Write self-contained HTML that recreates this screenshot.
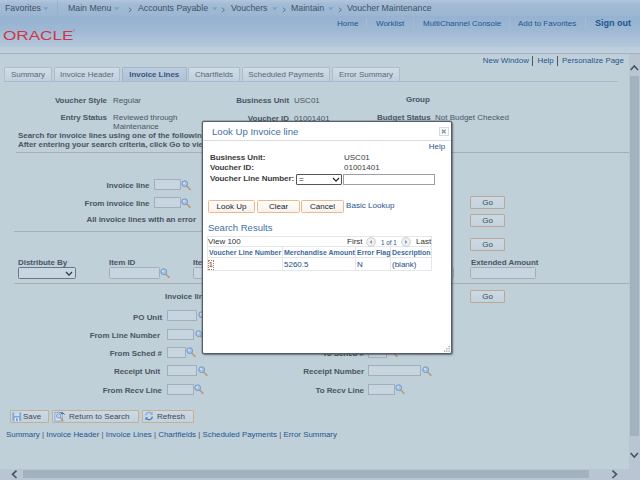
<!DOCTYPE html>
<html><head><meta charset="utf-8"><title>Voucher Maintenance</title>
<style>
*{box-sizing:border-box;margin:0;padding:0}
html,body{width:640px;height:480px;overflow:hidden}
body{position:relative;background:#bfd0d9;font-family:"Liberation Sans",Arial,sans-serif;font-size:8px;color:#4b5563;line-height:10px}
.a{position:absolute;white-space:nowrap}
.b{font-weight:bold;letter-spacing:-.05px}
.r{text-align:right}
.lk{color:#1f5590}
#nav{left:0;top:0;width:640px;height:16px;background:linear-gradient(#b2c6db,#a3bcd5 25%,#9cb6d1)}
#nav .a{top:2px;font-size:8.75px;line-height:12px;color:#3f5068}
#nav .ch{top:3px;font-size:8px;color:#5d7590}
#nav .dd{top:8px;width:0;height:0;border:2.5px solid transparent;border-top:3px solid #7d9fcb;border-bottom:none}
#hdr{left:0;top:16px;width:640px;height:31px;background:linear-gradient(#95b2d0,#9cb7d3 40%,#b5c8db)}
#hdr2{left:0;top:47px;width:640px;height:6px;background:linear-gradient(#bbccdc,#c0d0de)}
#hdrline{left:0;top:53px;width:640px;height:1px;background:#a7b1c3}
.hl{top:18px;font-size:8px;line-height:11px;color:#1f5590}
.hs{top:18px;width:1px;height:11px;background:#a9bccf}
.tab{top:67px;height:14px;border:1px solid #adbccb;border-bottom:none;background:linear-gradient(#d0dde7,#c0d0dc);font-size:8px;line-height:13px;text-align:center;color:#5a6878;border-radius:2px 2px 0 0}
.inp{border:1px solid #a4aeb9;background:#c6d5df;height:11px}
.btn{border:1px solid #c4b194;background:linear-gradient(#cbd9e3,#c3d3de);border-radius:1px;height:13px;font-size:8px;line-height:11px;text-align:center;color:#3f4852}
.go{border-color:#bda79a}
.hr{height:1px;background:#aaacb2}
i{font-style:normal;color:#5a5068}
.mbtn{height:13px;border:1px solid #ecb88c;border-radius:1.5px;background:linear-gradient(#fff,#f6f1ec);font-size:8px;line-height:11px;text-align:center;color:#222}
#grid{left:207px;top:236px;width:225px;height:35px;border:1px solid #e4e6e9;background:#fff}
.gh{top:248px;font-size:7px;line-height:10px;font-weight:bold;color:#3d6a9c}
.gd{top:260px;font-size:8px;line-height:10px;color:#1c4a88}
.vl{top:247px;width:1px;height:24px;background:#e4e6e9}
</style></head><body>
<div class="a" id="nav">
 <div class="a" style="left:5px">Favorites</div><svg class="a" style="left:42.5px;top:7px" width="6" height="4" viewBox="0 0 6 4"><path d="M.3 .3 L5.3 .3 L2.8 3.3z" fill="#7b9fcf"/></svg>
 <div class="a" style="left:57px;top:1px;width:1px;height:14px;background:#98b0cb"></div>
 <div class="a" style="left:68px">Main Menu</div><svg class="a" style="left:113.5px;top:7px" width="6" height="4" viewBox="0 0 6 4"><path d="M.3 .3 L5.3 .3 L2.8 3.3z" fill="#7b9fcf"/></svg>
 <svg class="a" style="left:128px;top:6.5px" width="5" height="6" viewBox="0 0 5 6"><path d="M.8 .6 L3.4 2.9 L.8 5.2" fill="none" stroke="#566a88" stroke-width=".9"/></svg>
 <div class="a" style="left:138px">Accounts Payable</div><svg class="a" style="left:211.5px;top:7px" width="6" height="4" viewBox="0 0 6 4"><path d="M.3 .3 L5.3 .3 L2.8 3.3z" fill="#7b9fcf"/></svg>
 <svg class="a" style="left:221px;top:6.5px" width="5" height="6" viewBox="0 0 5 6"><path d="M.8 .6 L3.4 2.9 L.8 5.2" fill="none" stroke="#566a88" stroke-width=".9"/></svg>
 <div class="a" style="left:231px">Vouchers</div><svg class="a" style="left:271.5px;top:7px" width="6" height="4" viewBox="0 0 6 4"><path d="M.3 .3 L5.3 .3 L2.8 3.3z" fill="#7b9fcf"/></svg>
 <svg class="a" style="left:282px;top:6.5px" width="5" height="6" viewBox="0 0 5 6"><path d="M.8 .6 L3.4 2.9 L.8 5.2" fill="none" stroke="#566a88" stroke-width=".9"/></svg>
 <div class="a" style="left:291px">Maintain</div><svg class="a" style="left:327.5px;top:7px" width="6" height="4" viewBox="0 0 6 4"><path d="M.3 .3 L5.3 .3 L2.8 3.3z" fill="#7b9fcf"/></svg>
 <svg class="a" style="left:338px;top:6.5px" width="5" height="6" viewBox="0 0 5 6"><path d="M.8 .6 L3.4 2.9 L.8 5.2" fill="none" stroke="#566a88" stroke-width=".9"/></svg>
 <div class="a" style="left:347px">Voucher Maintenance</div>
</div>
<div class="a" id="hdr"></div><div class="a" id="hdr2"></div>
<div class="a" id="hdrline"></div>
<div class="a hl" style="left:337px">Home</div><div class="a hs" style="left:366px"></div>
<div class="a hl" style="left:376px">Worklist</div><div class="a hs" style="left:413px"></div>
<div class="a hl" style="left:423px">MultiChannel Console</div><div class="a hs" style="left:509px"></div>
<div class="a hl" style="left:518px">Add to Favorites</div><div class="a hs" style="left:585px"></div>
<div class="a hl b" style="left:595px;font-size:9.1px">Sign out</div>
<div class="a" style="left:2.6px;top:28.6px;font-size:12.5px;line-height:14px;color:#cf3548;transform-origin:0 0;transform:scaleX(1.37)">ORACLE</div>
<div class="a" style="left:73px;top:29px;font-size:3px;line-height:4px;color:#cf3548">®</div>
<div class="a lk" style="left:482.8px;top:56px;font-size:7.9px">New Window</div><div class="a lk" style="left:537.5px;top:56px;font-size:7.9px">Help</div><div class="a lk" style="left:562px;top:56px;font-size:7.9px">Personalize Page</div><div class="a" style="left:532px;top:56px;width:1px;height:10px;background:#4e5866"></div><div class="a" style="left:557px;top:56px;width:1px;height:10px;background:#4e5866"></div>

<div class="a tab" style="left:4px;width:48px">Summary</div>
<div class="a tab" style="left:54px;width:66px">Invoice Header</div>
<div class="a tab b" style="left:122px;width:64.5px;background:linear-gradient(#bccde0,#adc1d7);border-color:#a0b3c9;color:#3e5579">Invoice Lines</div>
<div class="a tab" style="left:188px;width:52px">Chartfields</div>
<div class="a tab" style="left:242px;width:88px">Scheduled Payments</div>
<div class="a tab" style="left:332px;width:68px">Error Summary</div>
<div class="a hr" style="left:4px;top:81px;width:614px;background:#a9bad0"></div>

<div class="a b r" style="left:0;width:107px;top:96px">Voucher Style</div>
<div class="a" style="left:113px;top:96px">Regular</div>
<div class="a b r" style="left:0;width:107px;top:113px">Entry Status</div>
<div class="a" style="left:113px;top:113px">Reviewed through</div>
<div class="a" style="left:113px;top:122px">Maintenance</div>
<div class="a b r" style="left:190px;width:99px;top:96px">Business Unit</div>
<div class="a" style="left:294px;top:96px">USC01</div>
<div class="a b r" style="left:190px;width:99px;top:114px">Voucher ID</div>
<div class="a" style="left:294px;top:114px">01001401</div>
<div class="a b" style="left:406px;top:95px">Group</div>
<div class="a b" style="left:377px;top:113px">Budget Status</div>
<div class="a" style="left:435px;top:113px">Not Budget Checked</div>
<div class="a b" style="left:18px;top:131px">Search for invoice lines using one of the following</div>
<div class="a b" style="left:18px;top:140px">After entering your search criteria, click Go to view</div>
<div class="a hr" style="left:16px;top:152px;width:613px"></div>

<div class="a b r" style="left:50px;width:99.5px;top:181px">Invoice line</div>
<div class="a inp" style="left:154px;top:179px;width:27px"></div>
<div class="a b r" style="left:50px;width:99.5px;top:199px">From invoice line</div>
<div class="a inp" style="left:154px;top:197px;width:27px"></div>
<div class="a b r" style="left:50px;width:146px;top:215px">All invoice lines with an error</div>
<div class="a btn go" style="left:470px;top:196px;width:35px">Go</div>
<div class="a btn go" style="left:470px;top:214px;width:35px">Go</div>
<div class="a btn go" style="left:470px;top:238px;width:35px">Go</div>
<div class="a btn go" style="left:470px;top:290px;width:35px">Go</div>
<div class="a hr" style="left:13.5px;top:231px;width:420px"></div>
<div class="a b" style="left:18px;top:258px">Distribute By</div>
<div class="a inp" style="left:18px;top:267px;width:58px;height:12px;background:#c7d6e0;border-color:#6b768a;border-radius:1.5px"></div>
<svg class="a" style="left:65px;top:271px" width="8" height="6" viewBox="0 0 8 6"><path d="M1 1 L4 4.2 L7 1" stroke="#2c3442" stroke-width="1.2" fill="none"/></svg>
<div class="a b" style="left:109px;top:258px">Item ID</div>
<div class="a inp" style="left:109px;top:267px;width:50.5px;height:12px;border-radius:1.5px"></div>
<div class="a b" style="left:193px;top:258px">Item</div>
<div class="a inp" style="left:192.5px;top:267px;width:60px;height:12px;border-radius:1.5px"></div>
<div class="a b" style="left:471px;top:258px">Extended Amount</div>
<div class="a inp" style="left:470px;top:267px;width:66px;height:12px;border-radius:1.5px"></div>
<div class="a inp" style="left:400px;top:267px;width:54px;height:12px;border-radius:1.5px"></div>
<div class="a hr" style="left:13.5px;top:283px;width:615.5px"></div>
<div class="a b" style="left:165px;top:292px">Invoice line</div>
<div class="a b r" style="left:50px;width:112px;top:313px">PO Unit</div>
<div class="a inp" style="left:167px;top:310px;width:30px"></div>
<div class="a b r" style="left:50px;width:110px;top:331px">From Line Number</div>
<div class="a inp" style="left:167px;top:329px;width:27px"></div>
<div class="a b r" style="left:50px;width:112px;top:349px">From Sched #</div>
<div class="a inp" style="left:167px;top:347px;width:19px"></div>
<div class="a b r" style="left:50px;width:110px;top:367px">Receipt Unit</div>
<div class="a inp" style="left:167px;top:365px;width:30px"></div>
<div class="a b r" style="left:50px;width:112px;top:386px">From Recv Line</div>
<div class="a inp" style="left:167px;top:384px;width:27px"></div>
<div class="a b r" style="left:250px;width:114px;top:367px">Receipt Number</div>
<div class="a b r" style="left:250px;width:114px;top:349px">To Sched #</div>
<div class="a inp" style="left:368px;top:347px;width:19px"></div>
<div class="a inp" style="left:368px;top:365px;width:53px"></div>
<div class="a b r" style="left:250px;width:114px;top:386px">To Recv Line</div>
<div class="a inp" style="left:368px;top:384px;width:27px"></div>

<div class="a btn" style="left:10px;top:410px;width:39px;text-align:left;padding-left:12px">Save</div>
<div class="a btn" style="left:52px;top:410px;width:87px;text-align:left;padding-left:16px">Return to Search</div>
<div class="a btn" style="left:142px;top:410px;width:52px;text-align:left;padding-left:14px">Refresh</div>
<div class="a lk" style="left:6px;top:430px;font-size:7.9px">Summary <i>|</i> Invoice Header <i>|</i> Invoice Lines <i>|</i> Chartfields <i>|</i> Scheduled Payments <i>|</i> Error Summary</div>

<svg class="a" style="left:181px;top:180px" width="11" height="11" viewBox="0 0 11 11"><path d="M5.8 6 L9 9.4" stroke="#b89c7c" stroke-width="1.6" stroke-linecap="round"/><circle cx="3.7" cy="3.7" r="2.9" fill="#a3c6e8" stroke="#6d92bf" stroke-width=".9"/><circle cx="3" cy="3" r="1" fill="#cfe2f4"/></svg>
<svg class="a" style="left:181px;top:198px" width="11" height="11" viewBox="0 0 11 11"><path d="M5.8 6 L9 9.4" stroke="#b89c7c" stroke-width="1.6" stroke-linecap="round"/><circle cx="3.7" cy="3.7" r="2.9" fill="#a3c6e8" stroke="#6d92bf" stroke-width=".9"/><circle cx="3" cy="3" r="1" fill="#cfe2f4"/></svg>
<svg class="a" style="left:160px;top:268px" width="11" height="11" viewBox="0 0 11 11"><path d="M5.8 6 L9 9.4" stroke="#b89c7c" stroke-width="1.6" stroke-linecap="round"/><circle cx="3.7" cy="3.7" r="2.9" fill="#a3c6e8" stroke="#6d92bf" stroke-width=".9"/><circle cx="3" cy="3" r="1" fill="#cfe2f4"/></svg>
<svg class="a" style="left:198px;top:311px" width="11" height="11" viewBox="0 0 11 11"><path d="M5.8 6 L9 9.4" stroke="#b89c7c" stroke-width="1.6" stroke-linecap="round"/><circle cx="3.7" cy="3.7" r="2.9" fill="#a3c6e8" stroke="#6d92bf" stroke-width=".9"/><circle cx="3" cy="3" r="1" fill="#cfe2f4"/></svg>
<svg class="a" style="left:195px;top:330px" width="11" height="11" viewBox="0 0 11 11"><path d="M5.8 6 L9 9.4" stroke="#b89c7c" stroke-width="1.6" stroke-linecap="round"/><circle cx="3.7" cy="3.7" r="2.9" fill="#a3c6e8" stroke="#6d92bf" stroke-width=".9"/><circle cx="3" cy="3" r="1" fill="#cfe2f4"/></svg>
<svg class="a" style="left:186px;top:347px" width="11" height="11" viewBox="0 0 11 11"><path d="M5.8 6 L9 9.4" stroke="#b89c7c" stroke-width="1.6" stroke-linecap="round"/><circle cx="3.7" cy="3.7" r="2.9" fill="#a3c6e8" stroke="#6d92bf" stroke-width=".9"/><circle cx="3" cy="3" r="1" fill="#cfe2f4"/></svg>
<svg class="a" style="left:198px;top:366px" width="11" height="11" viewBox="0 0 11 11"><path d="M5.8 6 L9 9.4" stroke="#b89c7c" stroke-width="1.6" stroke-linecap="round"/><circle cx="3.7" cy="3.7" r="2.9" fill="#a3c6e8" stroke="#6d92bf" stroke-width=".9"/><circle cx="3" cy="3" r="1" fill="#cfe2f4"/></svg>
<svg class="a" style="left:194px;top:384px" width="11" height="11" viewBox="0 0 11 11"><path d="M5.8 6 L9 9.4" stroke="#b89c7c" stroke-width="1.6" stroke-linecap="round"/><circle cx="3.7" cy="3.7" r="2.9" fill="#a3c6e8" stroke="#6d92bf" stroke-width=".9"/><circle cx="3" cy="3" r="1" fill="#cfe2f4"/></svg>
<svg class="a" style="left:422px;top:366px" width="11" height="11" viewBox="0 0 11 11"><path d="M5.8 6 L9 9.4" stroke="#b89c7c" stroke-width="1.6" stroke-linecap="round"/><circle cx="3.7" cy="3.7" r="2.9" fill="#a3c6e8" stroke="#6d92bf" stroke-width=".9"/><circle cx="3" cy="3" r="1" fill="#cfe2f4"/></svg>
<svg class="a" style="left:395px;top:384px" width="11" height="11" viewBox="0 0 11 11"><path d="M5.8 6 L9 9.4" stroke="#b89c7c" stroke-width="1.6" stroke-linecap="round"/><circle cx="3.7" cy="3.7" r="2.9" fill="#a3c6e8" stroke="#6d92bf" stroke-width=".9"/><circle cx="3" cy="3" r="1" fill="#cfe2f4"/></svg>
<svg class="a" style="left:388px;top:347px" width="11" height="11" viewBox="0 0 11 11"><path d="M5.8 6 L9 9.4" stroke="#b89c7c" stroke-width="1.6" stroke-linecap="round"/><circle cx="3.7" cy="3.7" r="2.9" fill="#a3c6e8" stroke="#6d92bf" stroke-width=".9"/><circle cx="3" cy="3" r="1" fill="#cfe2f4"/></svg>
<svg class="a" style="left:12px;top:412px" width="10" height="10" viewBox="0 0 10 10"><rect x=".4" y=".2" width="8.8" height="8.8" rx=".8" fill="#7fa8de"/><rect x="2.2" y=".2" width="5.2" height="3.8" fill="#c9dbf2"/><rect x="2.6" y="5.6" width="4.4" height="3.4" fill="#e4ecf6"/><rect x="4.2" y="6.2" width="1.4" height="2.8" fill="#5d86c4"/></svg>
<svg class="a" style="left:54px;top:411px" width="12" height="11" viewBox="0 0 12 11"><rect x=".9" y="1.4" width="7.4" height="8.6" fill="#d6e4f3" stroke="#7ea3d2" stroke-width=".9"/><path d="M6.2 6.4 L8.8 9.6" stroke="#c98f4e" stroke-width="1.4" stroke-linecap="round"/><circle cx="4.6" cy="4.9" r="2.2" fill="#b9d3ee" stroke="#6d8fbd" stroke-width=".8"/><path d="M7.2 2.6 Q9.2 .8 10.6 3.6" stroke="#3c5f98" stroke-width="1" fill="none"/><path d="M6.4 1.4 L8.4 1.6 L7 3.4z" fill="#3c5f98"/></svg>
<svg class="a" style="left:144px;top:411px" width="10" height="10" viewBox="0 0 10 10"><path d="M1.6 4.4 A3.5 3.5 0 0 1 7.6 2.4" stroke="#7fa6dc" stroke-width="1.3" fill="none"/><path d="M8.6 .8 L8.6 3.8 L5.8 3.4z" fill="#7fa6dc"/><path d="M8.4 5.6 A3.5 3.5 0 0 1 2.4 7.6" stroke="#4a78bc" stroke-width="1.3" fill="none"/><path d="M1.4 9.2 L1.4 6.2 L4.2 6.6z" fill="#4a78bc"/></svg>
<!-- scrollbars -->
<div class="a" style="left:629px;top:54px;width:11px;height:426px;background:#b9c5d3"></div>
<div class="a" style="left:0;top:469px;width:640px;height:11px;background:#b9c5d3"></div>
<div class="a" style="left:630px;top:76px;width:9px;height:360px;background:#a3b3be"></div>
<div class="a" style="left:23px;top:470px;width:566px;height:8px;background:#a3b3be"></div>
<svg class="a" style="left:629px;top:54px" width="11" height="426" viewBox="0 0 11 426"><path d="M1.6 16 L5.3 12 L9 16 M1.6 399 L5.3 403 L9 399" fill="none" stroke="#485260" stroke-width="1.6"/></svg>
<svg class="a" style="left:0;top:469px" width="640" height="11" viewBox="0 0 640 11"><path d="M16.5 1.6 L12.5 5.3 L16.5 9 M612.5 1.6 L616.5 5.3 L612.5 9" fill="none" stroke="#485260" stroke-width="1.6"/></svg>

<!-- modal -->
<div class="a" id="modal" style="left:202px;top:121px;width:250px;height:233px;background:#fff;border-radius:2px;border:1px solid #56606a;box-shadow:0 0 0 .5px rgba(70,80,92,.55),1px 1px 2px rgba(0,0,0,.4)">
</div>
<div class="a" style="left:212px;top:126px;font-size:9.6px;line-height:12px;color:#41709f">Look Up Invoice line</div>
<div class="a" style="left:203px;top:140px;width:248px;height:1px;background:#d9dde1"></div>
<div class="a" style="left:439px;top:127px;width:9.5px;height:9px;border:1px solid #d9dcdf;background:#f9fafa"></div>
<svg class="a" style="left:439px;top:127px" width="9" height="9" viewBox="0 0 9 9"><path d="M2.9 2.7 L6.6 6.3 M6.6 2.7 L2.9 6.3" stroke="#8595a5" stroke-width="1.3" fill="none"/></svg>
<div class="a lk" style="left:428.8px;top:142px;font-size:7.9px">Help</div>
<div class="a b" style="left:210px;top:153px;color:#3c3c3c">Business Unit:</div>
<div class="a b" style="left:210px;top:163px;color:#3c3c3c">Voucher ID:</div>
<div class="a b" style="left:210px;top:174px;color:#3c3c3c">Voucher Line Number:</div>
<div class="a" style="left:344px;top:153px;color:#3c3c3c">USC01</div>
<div class="a" style="left:344px;top:163px;color:#3c3c3c">01001401</div>
<div class="a" style="left:296px;top:174px;width:46px;height:11px;border:1px solid #555;border-radius:1px;background:#fff;font-size:8px;line-height:9px;padding-left:2px;color:#222">=</div>
<svg class="a" style="left:332px;top:177px" width="8" height="6" viewBox="0 0 8 6"><path d="M1 1 L4 4.2 L7 1" stroke="#222" stroke-width="1.1" fill="none"/></svg>
<div class="a" style="left:343px;top:174px;width:92px;height:11px;border:1px solid #9a9fa5;background:#fff"></div>
<div class="a mbtn" style="left:208px;top:200px;width:47px">Look Up</div>
<div class="a mbtn" style="left:257px;top:200px;width:43px">Clear</div>
<div class="a mbtn" style="left:301px;top:200px;width:43px">Cancel</div>
<div class="a lk" style="left:346px;top:201px;font-size:8.1px">Basic Lookup</div>
<div class="a" style="left:208px;top:222px;font-size:9.5px;line-height:12px;color:#41709f">Search Results</div>
<div class="a" id="grid"></div>
<div class="a" style="left:207px;top:246px;width:225px;height:1px;background:#e4e6e9"></div>
<div class="a" style="left:207px;top:257px;width:225px;height:1px;background:#e4e6e9"></div>
<div class="a vl" style="left:282px"></div><div class="a vl" style="left:355px"></div><div class="a vl" style="left:390px"></div>
<div class="a" style="left:208px;top:237px;color:#333">View 100</div>
<div class="a" style="left:347px;top:237px;color:#333">First</div>
<div class="a" style="left:416px;top:237px;color:#333">Last</div>
<div class="a" style="left:381px;top:238px;font-size:6.3px;line-height:9px;color:#1f4f8f">1 of 1</div>
<svg class="a" style="left:366px;top:236.5px" width="10" height="10" viewBox="0 0 10 10"><circle cx="5" cy="5" r="4.4" fill="#f0f1f3" stroke="#c6cacf" stroke-width=".9"/><path d="M6 3 L3.6 5 L6 7z" fill="#9096a0"/></svg>
<svg class="a" style="left:401px;top:236.5px" width="10" height="10" viewBox="0 0 10 10"><circle cx="5" cy="5" r="4.4" fill="#f0f1f3" stroke="#c6cacf" stroke-width=".9"/><path d="M4 3 L6.4 5 L4 7z" fill="#9096a0"/></svg>
<div class="a gh" style="left:209px">Voucher Line Number</div>
<div class="a gh" style="left:284px">Merchandise Amount</div>
<div class="a gh" style="left:357px">Error Flag</div>
<div class="a gh" style="left:392px">Description</div>
<div class="a gd" style="left:208px;outline:1px dotted #c8783c;outline-offset:0;width:4px;top:260.5px;line-height:8.5px;left:208.5px">1</div>
<div class="a gd" style="left:284px">5260.5</div>
<div class="a gd" style="left:357px">N</div>
<div class="a gd" style="left:392px">(blank)</div>
<svg class="a" style="left:443px;top:345px" width="8" height="8" viewBox="0 0 8 8"><g fill="#8a8f95"><rect x="5.5" y="1" width="1.2" height="1.2"/><rect x="3.2" y="3.2" width="1.2" height="1.2"/><rect x="5.5" y="3.2" width="1.2" height="1.2"/><rect x="1" y="5.5" width="1.2" height="1.2"/><rect x="3.2" y="5.5" width="1.2" height="1.2"/><rect x="5.5" y="5.5" width="1.2" height="1.2"/></g></svg>
</body></html>
